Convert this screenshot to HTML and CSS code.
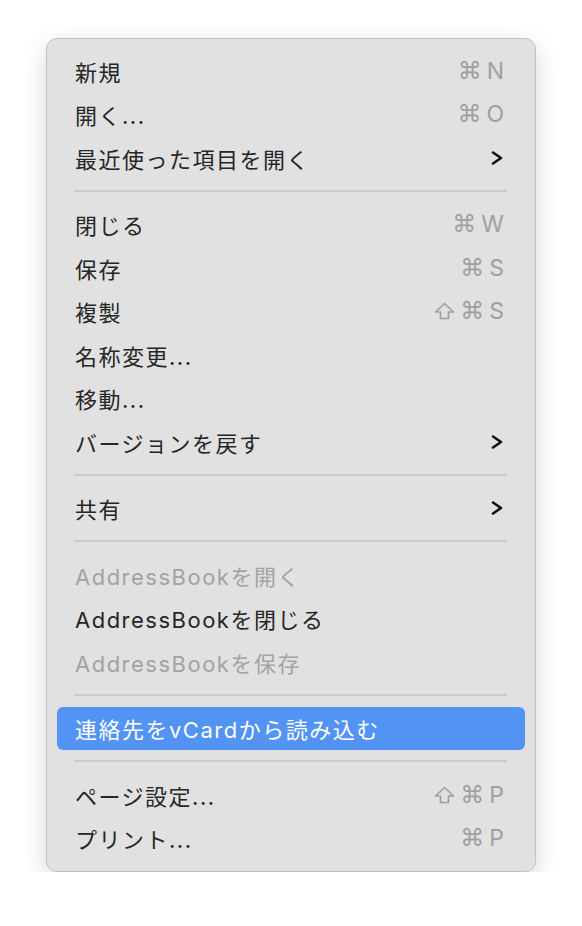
FILE: index.html
```html
<!DOCTYPE html>
<html lang="ja">
<head>
    <meta charset="UTF-8">
    <meta name="viewport" content="width=device-width, initial-scale=1.0">
    <title>ファイル</title>
    <link rel="stylesheet" href="styles.css">
</head>
<body>
    <div class="menu">
        <div class="item"><span class="label">新規</span><span class="key"><span class="sym">⌘</span>N</span></div>
        <div class="item"><span class="label">開く...</span><span class="key"><span class="sym">⌘</span>O</span></div>
        <div class="item"><span class="label">最近使った項目を開く</span>
            <svg class="chev" width="12" height="14" viewBox="0 0 12 14"><polyline points="2,1.5 10,7 2,12.5" /></svg>
        </div>

        <div class="separator"></div>

        <div class="item"><span class="label">閉じる</span><span class="key"><span class="sym">⌘</span>W</span></div>
        <div class="item"><span class="label">保存</span><span class="key"><span class="sym">⌘</span>S</span></div>
        <div class="item"><span class="label">複製</span><span class="key">
            <svg class="shift" width="21" height="18" viewBox="0 0 21 18"><polygon points="10.5,1.5 19.5,10 14.5,10 14.5,16.5 6.5,16.5 6.5,10 1.5,10" /></svg>
            <span class="sym">⌘</span>S</span></div>
        <div class="item"><span class="label">名称変更...</span></div>
        <div class="item"><span class="label">移動...</span></div>
        <div class="item"><span class="label">バージョンを戻す</span>
            <svg class="chev" width="12" height="14" viewBox="0 0 12 14"><polyline points="2,1.5 10,7 2,12.5" /></svg>
        </div>

        <div class="separator"></div>

        <div class="item"><span class="label">共有</span>
            <svg class="chev" width="12" height="14" viewBox="0 0 12 14"><polyline points="2,1.5 10,7 2,12.5" /></svg>
        </div>

        <div class="separator"></div>

        <div class="item disabled"><span class="label">AddressBookを開く</span></div>
        <div class="item"><span class="label">AddressBookを閉じる</span></div>
        <div class="item disabled"><span class="label">AddressBookを保存</span></div>

        <div class="separator"></div>

        <div class="item selected"><span class="label">連絡先をvCardから読み込む</span></div>

        <div class="separator"></div>

        <div class="item"><span class="label">ページ設定...</span><span class="key">
            <svg class="shift" width="21" height="18" viewBox="0 0 21 18"><polygon points="10.5,1.5 19.5,10 14.5,10 14.5,16.5 6.5,16.5 6.5,10 1.5,10" /></svg>
            <span class="sym">⌘</span>P</span></div>
        <div class="item"><span class="label">プリント...</span><span class="key"><span class="sym">⌘</span>P</span></div>
    </div>
</body>
</html>
```

FILE: styles.css
```css
body {
    margin: 0;
    padding: 0;
    background-color: #fff;
    font-family: Inter, "Noto Sans CJK JP", sans-serif;
}

.menu {
    box-sizing: border-box;
    width: 490px;
    margin: 38px 0 0 46px;
    padding: 10px 0 11px;
    background-color: #e1e1e1;
    border: 1px solid #c2c2c2;
    border-radius: 11px;
    box-shadow: 0 8px 24px rgba(0, 0, 0, 0.16);
}

.item {
    display: flex;
    align-items: center;
    height: 43.5px;
    margin: 0 10px;
    padding: 0 21px 0 18px;
    border-radius: 6px;
    font-size: 22px;
    color: #262626;
}

.label {
    flex: 1;
    white-space: nowrap;
    letter-spacing: 1.5px;
}

.disabled {
    color: #a3a3a3;
}

.selected {
    background-color: #5393f3;
    color: #fff;
}

.key {
    display: flex;
    align-items: center;
    gap: 5px;
    color: #a0a0a0;
    font-size: 23px;
}

.sym {
    font-family: "DejaVu Sans", sans-serif;
    font-size: 24px;
}

.shift polygon {
    fill: none;
    stroke: #a0a0a0;
    stroke-width: 1.7;
    stroke-linejoin: round;
}

/* submenu arrow */
.chev {
    margin-right: 1px;
}

.chev polyline {
    fill: none;
    stroke: #111;
    stroke-width: 2.6;
    stroke-linecap: round;
    stroke-linejoin: round;
}

.separator {
    height: 2px;
    margin: 10px 28px 11px 27px;
    background-color: #cbcbcb;
}
```
